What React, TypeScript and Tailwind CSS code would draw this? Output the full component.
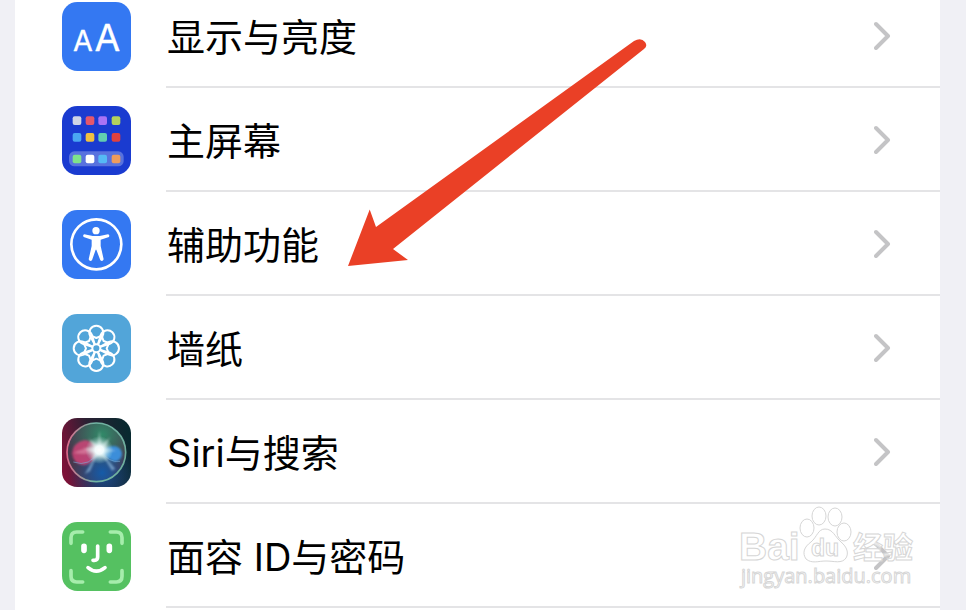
import type { ReactNode } from 'react'

const HOME_DOTS = [
  ['#cfd5e6', '#e4576b', '#a873f5', '#b3d15c'],
  ['#4aa7f2', '#efc040', '#62cdb0', '#e0413f'],
  ['#7fe38a', '#ffffff', '#55b9f5', '#ee9c5c'],
]
const DOT_X = [45, 84, 122, 162]
const DOT_Y = [44, 94, 159]
const PETALS = [0, 45, 90, 135, 180, 225, 270, 315]

function IconTile({ fill, children }: { fill: string; children: ReactNode }) {
  return (
    <svg viewBox="0 0 207 207" className="size-[69px] shrink-0" aria-hidden="true">
      <rect width="207" height="207" rx="46" fill={fill} />
      {children}
    </svg>
  )
}

function DisplayIcon() {
  return (
    <IconTile fill="#3478f2">
      <g fill="#fff" stroke="#fff" strokeLinejoin="round" fontFamily="Inter, sans-serif" textAnchor="middle">
        <text x="63" y="147" fontSize="86" strokeWidth="1">A</text>
        <text x="136" y="147" fontSize="112">A</text>
      </g>
    </IconTile>
  )
}

function HomeIcon() {
  return (
    <IconTile fill="#1a3bd0">
      <rect x="21" y="136" width="164" height="45" rx="16" fill="#5872de" />
      {HOME_DOTS.map((row, r) =>
        row.map((color, c) => (
          <rect key={color} x={DOT_X[c] - 13} y={DOT_Y[r] - 13} width="26" height="26" rx="6" fill={color} />
        ))
      )}
    </IconTile>
  )
}

function AccessibilityIcon() {
  return (
    <IconTile fill="#3478f2">
      <circle cx="103" cy="103" r="75" fill="none" stroke="#fff" strokeWidth="8" />
      <circle cx="102" cy="62" r="11" fill="#fff" />
      <path
        d="M67 73 L92 78 H113 L138 73 Q144 75 141 81 L116 89 V108 L125 148 Q122 156 115 151 L103 119 H101 L90 151 Q83 156 80 148 L89 108 V89 L65 81 Q61 75 67 73Z"
        fill="#fff"
      />
    </IconTile>
  )
}

function WallpaperIcon() {
  return (
    <IconTile fill="#52a5d9">
      <g transform="translate(103 103)" fill="none" stroke="#fff" strokeWidth="6" strokeLinejoin="round">
        <circle r="12" />
        {PETALS.map((angle) => (
          <path key={angle} d="M-5 -12 L-19 -38 A21 21 0 1 1 19 -38 L5 -12 M-18 -39 L0 -31 L18 -39" transform={`rotate(${angle})`} />
        ))}
      </g>
    </IconTile>
  )
}

function SiriIcon() {
  return (
    <IconTile fill="url(#siri-base)">
      <defs>
        <linearGradient id="siri-base" x1="0" y1="0.6" x2="1" y2="0.4">
          <stop offset="0" stopColor="#7d1238" />
          <stop offset="0.45" stopColor="#2b2033" />
          <stop offset="1" stopColor="#08292f" />
        </linearGradient>
        <radialGradient id="siri-green" cx="0.6" cy="0.2" r="0.6">
          <stop offset="0" stopColor="#318a69" />
          <stop offset="1" stopColor="#318a69" stopOpacity="0" />
        </radialGradient>
        <radialGradient id="siri-blue" cx="0.6" cy="0.85" r="0.5">
          <stop offset="0" stopColor="#155ba8" />
          <stop offset="1" stopColor="#155ba8" stopOpacity="0" />
        </radialGradient>
        <radialGradient id="siri-glow">
          <stop offset="0" stopColor="#fff" />
          <stop offset="0.3" stopColor="#f4ffff" stopOpacity="0.95" />
          <stop offset="1" stopColor="#a8e6dc" stopOpacity="0" />
        </radialGradient>
        <linearGradient id="siri-ring" x1="0" y1="0" x2="1" y2="0">
          <stop offset="0" stopColor="#d9698a" />
          <stop offset="0.45" stopColor="#72b5a4" />
          <stop offset="1" stopColor="#6fae9d" />
        </linearGradient>
        <filter id="siri-soft" x="-20%" y="-20%" width="140%" height="140%">
          <feGaussianBlur stdDeviation="3" />
        </filter>
      </defs>
      <rect width="207" height="207" rx="46" fill="url(#siri-blue)" opacity="0.7" />
      <circle cx="103" cy="103" r="88" fill="#47384d" />
      <circle cx="103" cy="103" r="88" fill="url(#siri-green)" />
      <circle cx="103" cy="103" r="88" fill="url(#siri-blue)" />
      <g filter="url(#siri-soft)">
        <path d="M112 96 Q92 68 68 66 Q32 74 30 106 Q34 140 66 142 Q94 138 112 96Z" fill="#cf4377" opacity="0.85" />
        <path d="M34 105 Q78 84 112 96 Q88 112 34 105Z" fill="#e99bb8" opacity="0.5" />
        <path d="M112 98 Q134 84 158 84 Q179 88 180 108 Q178 128 158 131 Q138 124 112 98Z" fill="#3b91df" opacity="0.95" />
        <path d="M112 96 L68 168 L84 160Z M112 96 L160 152 L150 158Z" fill="#9cc7e8" opacity="0.6" />
        <path d="M112 38 L118 82 L144 58 L128 92 L162 97 L125 104 L137 128 L112 112 L88 126 L99 103 L62 92 L98 88 L80 60 L107 82Z" fill="#fff" opacity="0.4" />
      </g>
      <path d="M34 132 Q84 150 112 96 Q142 136 174 130" fill="none" stroke="#77acd9" strokeWidth="3" opacity="0.6" />
      <circle cx="112" cy="96" r="42" fill="url(#siri-glow)" />
      <circle cx="103" cy="103" r="88" fill="none" stroke="url(#siri-ring)" strokeWidth="5" />
    </IconTile>
  )
}

function FaceIcon() {
  return (
    <IconTile fill="#55c161">
      <g fill="none" strokeLinecap="round" strokeLinejoin="round">
        <path
          d="M27 64 V47 Q27 30 44 30 H62 M145 30 H163 Q180 30 180 47 V64 M180 146 V163 Q180 180 163 180 H145 M62 180 H44 Q27 180 27 163 V146"
          stroke="#a6edac"
          strokeWidth="11"
        />
        <path d="M66 73 V85 M142 73 V85" stroke="#fff" strokeWidth="17" />
        <path d="M107 72 V105 Q107 115 97 115 H93 M78 137 Q103 158 129 137" stroke="#fff" strokeWidth="11" />
      </g>
    </IconTile>
  )
}

function Chevron() {
  return (
    <svg viewBox="0 0 18 30" className="h-[30px] w-[18px] shrink-0" aria-hidden="true">
      <path d="M2 4 L14 16 L2 28" fill="none" stroke="#c4c4c6" strokeWidth="4" strokeLinecap="round" strokeLinejoin="round" />
    </svg>
  )
}

function Arrow() {
  return (
    <svg viewBox="348 38 300 230" className="pointer-events-none absolute top-[38px] left-[348px] h-[230px] w-[300px]" aria-hidden="true">
      <path d="M348 266 L369.700 209.500 L376 227 L634 41 Q641 37 645 42 Q648 46 644 49 L393 249 L408 260Z" fill="#ea4026" />
    </svg>
  )
}

function Watermark() {
  return (
    <svg
      viewBox="738 503 180 92"
      className="pointer-events-none absolute top-[503px] right-12 h-[92px] w-[180px]"
      fill="#fff"
      fillOpacity="0.6"
      stroke="#d6d6d6"
      strokeWidth="1"
    >
      <text x="739" y="560" fontSize="39" fontWeight="700" fontFamily="'Liberation Sans', sans-serif">Bai</text>
      <ellipse cx="807" cy="528" rx="7" ry="9" />
      <ellipse cx="819" cy="516" rx="7" ry="9" />
      <ellipse cx="835" cy="517" rx="7" ry="9" />
      <ellipse cx="844" cy="532" rx="7" ry="9" />
      <path d="M825 529 C833 529 835 537 841 542 C847 547 849 553 846 558 C842 564 834 561 826 561 C818 561 812 564 806 559 C802 553 804 547 811 542 C817 537 818 529 825 529Z" />
      <text x="811" y="556" fontSize="23" fontWeight="700" fontFamily="'Liberation Sans', sans-serif">du</text>
      <text x="853" y="558" fontSize="30" fontWeight="700" fontFamily="'Noto Sans CJK SC', sans-serif">经验</text>
      <text x="741" y="583" fontSize="20" fontFamily="'Open Sans', sans-serif">jingyan.baidu.com</text>
    </svg>
  )
}

const ITEMS = [
  { label: '显示与亮度', icon: <DisplayIcon /> },
  { label: '主屏幕', icon: <HomeIcon /> },
  { label: '辅助功能', icon: <AccessibilityIcon /> },
  { label: '墙纸', icon: <WallpaperIcon /> },
  { label: 'Siri与搜索', icon: <SiriIcon /> },
  { label: '面容 ID与密码', icon: <FaceIcon /> },
]

export default function App() {
  return (
    <main className="relative flex min-h-screen overflow-hidden bg-[#f0f0f5] pr-[26px] pl-[15px] font-[Inter,'Noto_Sans_CJK_SC',sans-serif]">
      <ul className="-mt-4 flex-1 bg-white">
        {ITEMS.map((item) => (
          <li key={item.label}>
            <a href="#" className="flex h-[104px] items-center gap-[35px] pl-[47px] text-black">
              {item.icon}
              <span className="flex flex-1 items-center justify-between self-stretch border-b-2 border-[#e4e4e6] pr-12">
                <span className="pt-1 pl-px text-[38px] leading-[56px]">{item.label}</span>
                <Chevron />
              </span>
            </a>
          </li>
        ))}
      </ul>
      <Arrow />
      <Watermark />
    </main>
  )
}
